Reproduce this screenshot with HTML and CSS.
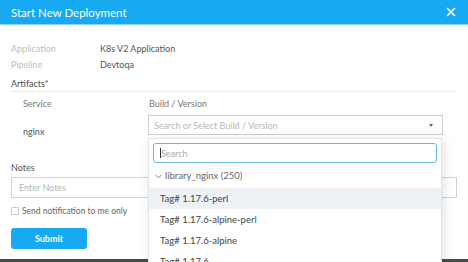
FILE: index.html
```html
<!DOCTYPE html>
<html>
<head>
  <title>Start New Deployment</title>
  <link rel="stylesheet" href="styles.css">
</head>
<body>
  <div class="modal">
    <div class="modal-header">
      <span class="modal-title">Start New Deployment</span>
      <svg class="close" width="10" height="10" viewBox="0 0 10 10">
        <path d="M1 1L9 9M9 1L1 9" stroke="#fff" stroke-width="1.6" fill="none"/>
      </svg>
    </div>
    <div class="modal-body">
      <div class="info-row"><span class="info-label">Application</span><span class="info-value">K8s V2 Application</span></div>
      <div class="info-row"><span class="info-label">Pipeline</span><span class="info-value">Devtoqa</span></div>

      <div class="section-title">Artifacts*</div>
      <div class="artifacts">
        <div class="art-head">
          <span class="col-service">Service</span>
          <span class="col-build">Build / Version</span>
        </div>
        <div class="art-row">
          <span class="col-service service-name">nginx</span>
          <div class="col-build select-wrap">
            <div class="select">
              <span class="select-placeholder">Search or Select Build / Version</span>
              <span class="caret"></span>
            </div>
            <div class="dropdown">
              <div class="dd-search"><span class="cursor"></span>Search</div>
              <div class="dd-group">
                <svg class="chevron" width="7" height="5" viewBox="0 0 7 5">
                  <path d="M0.5 0.8L3.5 3.8L6.5 0.8" stroke="#777" stroke-width="0.9" fill="none"/>
                </svg>
                library_nginx (250)
              </div>
              <div class="dd-item active">Tag# 1.17.6-perl</div>
              <div class="dd-item">Tag# 1.17.6-alpine-perl</div>
              <div class="dd-item">Tag# 1.17.6-alpine</div>
              <div class="dd-item">Tag# 1.17.6</div>
            </div>
          </div>
        </div>
      </div>

      <div class="notes-label">Notes</div>
      <div class="notes-input">Enter Notes</div>

      <label class="check-row"><span class="checkbox"></span>Send notification to me only</label>

      <button class="submit">Submit</button>
    </div>
  </div>
</body>
</html>
```

FILE: styles.css
```css
body {
  margin: 0;
  padding: 0;
  background-color: #4a4a4a;
  font-family: Lato, "Open Sans", sans-serif;
  height: 262px;
  overflow: hidden;
}
.modal {
  width: 468px;
  height: 259px;
  background-color: #fff;
}
.modal-header {
  height: 24px;
  background-color: #17a9f1;
  border-bottom: 1px solid #8fd3f6;
  display: flex;
  align-items: center;
  justify-content: space-between;
  padding: 0 11px;
}
.modal-title {
  color: #fff;
  font-size: 11.5px;
}
.close {
  margin-right: 1px;
}
.modal-body {
  padding: 15px 11px 0 11px;
}
.info-row {
  display: flex;
  height: 16px;
  align-items: center;
  font-size: 9px;
}
.info-label {
  width: 89px;
  color: #bdbdbd;
}
.info-value {
  color: #555;
}
.section-title {
  margin-top: 6px;
  font-size: 9px;
  color: #4a4a4a;
  padding-bottom: 2px;
  border-bottom: 1px solid #ececec;
}
.artifacts {
  padding-left: 12px;
}
.art-head {
  display: flex;
  font-size: 9px;
  color: #777;
  margin-top: 6px;
}
.col-service {
  width: 126px;
  flex-shrink: 0;
}
.col-build {
  width: 294px;
}
.art-row {
  display: flex;
  margin-top: 6px;
  height: 44px;
}
.service-name {
  font-size: 9px;
  color: #555;
  padding-top: 11px;
}
.select-wrap {
  position: relative;
}
.select {
  height: 20px;
  border: 1px solid #cfcfcf;
  box-sizing: border-box;
  display: flex;
  align-items: center;
  justify-content: space-between;
  padding: 0 9px 0 5px;
  margin-left: -1px;
}
.select-placeholder {
  font-size: 9px;
  color: #b8b8b8;
}
.caret {
  width: 0;
  height: 0;
  border-left: 2.5px solid transparent;
  border-right: 2.5px solid transparent;
  border-top: 3px solid #666;
}
.dropdown {
  position: absolute;
  top: 23px;
  left: -1px;
  width: 294px;
  height: 140px;
  background-color: #fff;
  border: 1px solid #e4e4e4;
  box-sizing: border-box;
  box-shadow: 2px 3px 10px rgba(0, 0, 0, 0.12);
  z-index: 2;
}
.dd-search {
  margin: 4px 4px 0 4px;
  height: 20px;
  box-sizing: border-box;
  border: 1.5px solid #6cb6e6;
  border-radius: 3px;
  display: flex;
  align-items: center;
  padding-left: 6px;
  font-size: 9px;
  color: #aaa;
}
.cursor {
  width: 1px;
  height: 10px;
  background-color: #333;
}
.dd-group {
  height: 25px;
  display: flex;
  align-items: center;
  padding-left: 6px;
  font-size: 9.5px;
  color: #666;
  gap: 3px;
}
.chevron {
  margin-top: 1px;
}
.dd-item {
  height: 21px;
  display: flex;
  align-items: center;
  padding-left: 11px;
  font-size: 9.5px;
  color: #444;
}
.dd-item.active {
  background-color: #eef2f5;
}
.notes-label {
  margin-top: 3px;
  font-size: 9px;
  color: #555;
}
.notes-input {
  margin-top: 4px;
  height: 21px;
  border: 1px solid #d2d2d2;
  box-sizing: border-box;
  display: flex;
  align-items: center;
  padding-left: 7px;
  font-size: 9px;
  color: #b5b5b5;
}
.check-row {
  display: flex;
  align-items: center;
  margin-top: 8px;
  font-size: 8.5px;
  color: #666;
  gap: 3px;
}
.checkbox {
  width: 6px;
  height: 6px;
  border: 1px solid #c8c8c8;
  border-radius: 1px;
}
.submit {
  margin-top: 12px;
  width: 76px;
  height: 21px;
  background-color: #17a9f1;
  color: #fff;
  border: none;
  border-radius: 3px;
  font-family: Lato, "Open Sans", sans-serif;
  font-size: 9px;
  font-weight: bold;
  padding: 0;
}
```
